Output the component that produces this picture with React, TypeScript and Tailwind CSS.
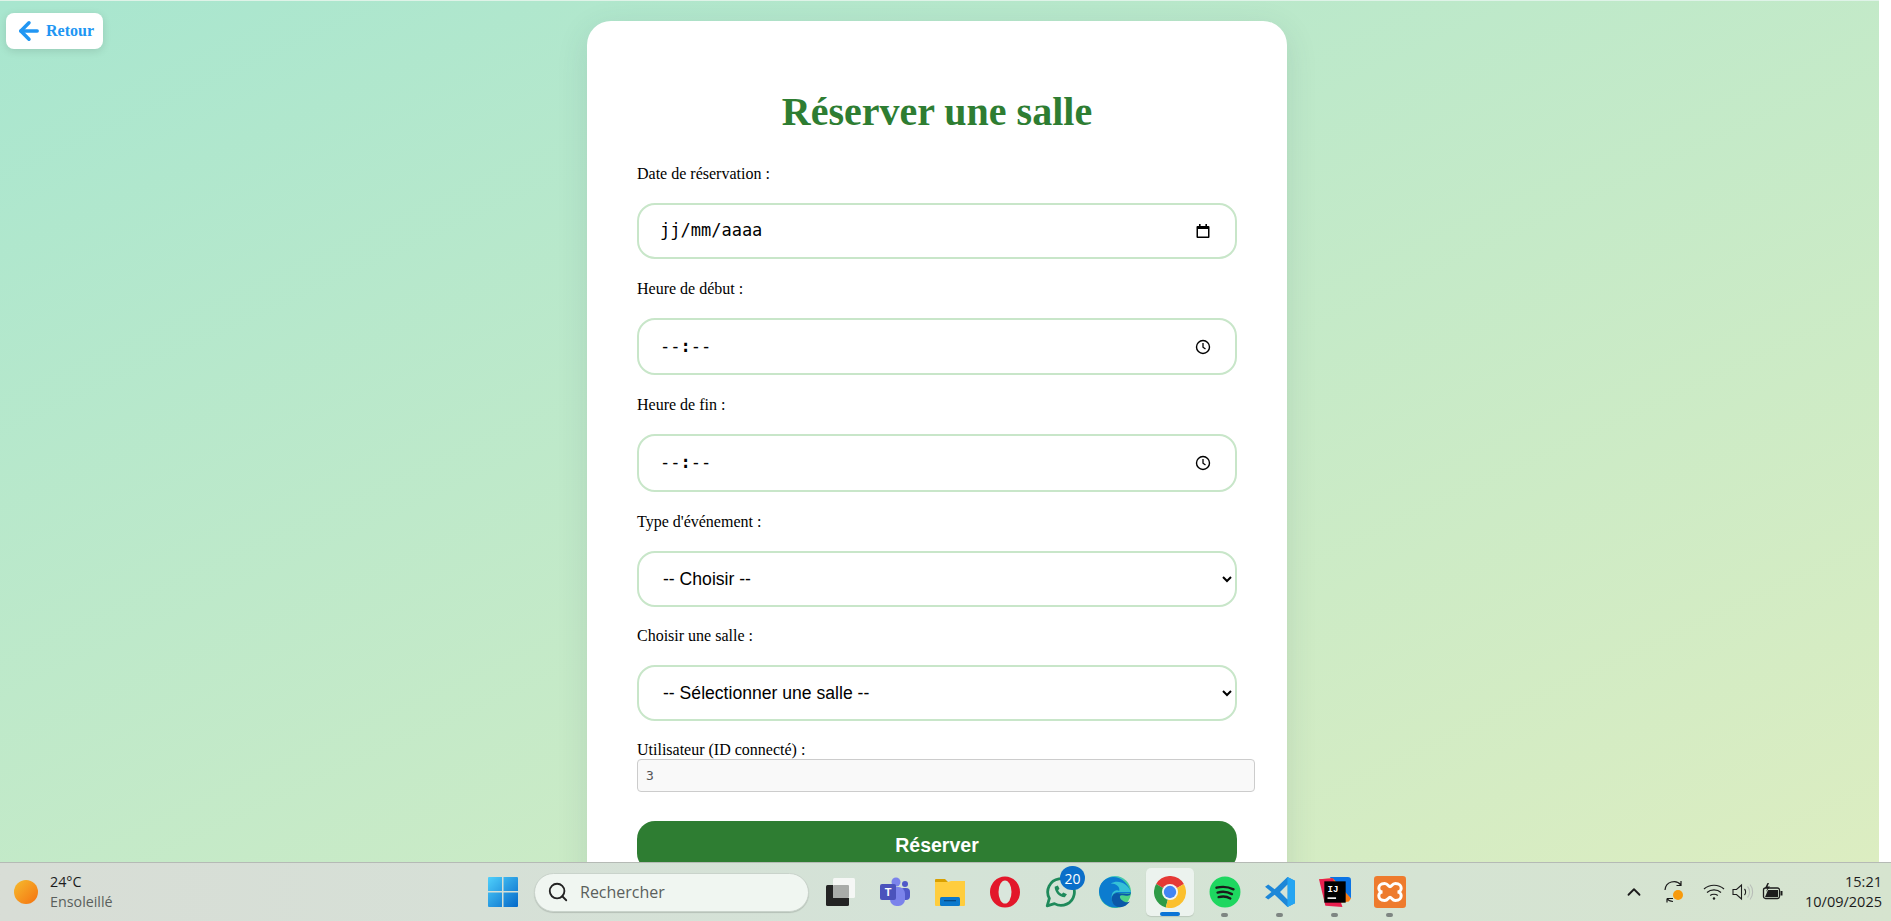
import { ArrowLeft, ChevronUp, Search } from "lucide-react";

const FIELD =
  "flex w-[600px] shrink-0 items-center rounded-[18px] border-2 border-[#c8e6c9] bg-white";

function CalendarIcon() {
  return (
    <svg width="16" height="16" viewBox="0 0 16 16" fill="none">
      <path d="M4 1h1.600v2H10.400V1H12v2h1.500A1 1 0 0 1 14.500 4v10a1 1 0 0 1-1 1h-11a1 1 0 0 1-1-1V4a1 1 0 0 1 1-1H4z" fill="#000" />
      <rect x="3" y="6" width="10" height="7.500" fill="#fff" />
    </svg>
  );
}

function ClockIcon() {
  return (
    <svg width="16" height="16" viewBox="0 0 16 16" fill="none" stroke="#000">
      <circle cx="8" cy="8" r="6.500" strokeWidth="1.400" />
      <path d="M8 4v4.200l2.500 1.800" strokeWidth="1.300" />
    </svg>
  );
}

function FieldLabel({ children, className }: { children: string; className: string }) {
  return (
    <label className={`block text-[16px] leading-[18px] text-black ${className}`}>
      {children}
    </label>
  );
}

function TimeField({ className }: { className: string }) {
  return (
    <div className={`${FIELD} pl-[21px] pr-[24px] ${className}`}>
      <span className="font-['DejaVu_Sans_Mono',monospace] text-[17px] text-black">
        --<b>:</b>--
      </span>
      <span className="ml-auto flex">
        <ClockIcon />
      </span>
    </div>
  );
}

function SelectField({ value }: { value: string }) {
  return (
    <select
      defaultValue={value}
      className="h-[56px] w-[600px] shrink-0 rounded-[18px] border-2 border-[#c8e6c9] bg-white pl-[20px] font-['Liberation_Sans',Arial,sans-serif] text-[17.600px] text-black outline-none"
    >
      <option>{value}</option>
    </select>
  );
}

function TaskIcon({ children, dot, active }: { children: React.ReactNode; dot?: boolean; active?: boolean }) {
  return (
    <div className={`relative flex h-[48px] w-[48px] items-center justify-center rounded-[5px] ${active ? "bg-[#ecf3ee] shadow-[0_1px_1px_rgba(0,0,0,0.12)]" : ""}`}>
      {children}
      {dot && <span className="absolute bottom-[-1px] left-[20px] h-[4px] w-[7px] rounded-full bg-[#7e8682]" />}
      {active && <span className="absolute bottom-0 left-[14px] h-[4px] w-[20px] rounded-full bg-[#0a74d6]" />}
    </div>
  );
}

function Taskbar() {
  return (
    <footer className="relative flex h-[59px] shrink-0 items-center border-t border-[#b5bab5] bg-gradient-to-r from-[#d8ddd6] via-[#d4e3d7] to-[#d6e4cf] font-['Open_Sans',sans-serif]">
      <div className="ml-[14px] flex w-[456px] items-center">
        <span className="h-[24px] w-[24px] rounded-full bg-gradient-to-br from-[#f4bb2d] to-[#f4700f]" />
        <div className="ml-[12px] text-[14.300px] leading-[20px]">
          <div className="text-[#1c1c1c]">24°C</div>
          <div className="text-[#5a5f5c]">Ensoleillé</div>
        </div>
      </div>

      <div className="flex items-center">
        <svg width="30" height="30" viewBox="0 0 30 30" className="ml-[18px]">
          <defs>
            <linearGradient id="win" x1="0" y1="0" x2="1" y2="1">
              <stop offset="0" stopColor="#4fd0fb" />
              <stop offset="1" stopColor="#0468c9" />
            </linearGradient>
          </defs>
          <path d="M0 1a1 1 0 0 1 1-1h13v14H0zM15.500 0H29a1 1 0 0 1 1 1v13H15.500zM0 15.500h14V30H1a1 1 0 0 1-1-1zM15.500 15.500H30V29a1 1 0 0 1-1 1H15.500z" fill="url(#win)" />
        </svg>
        <div className="ml-[16px] flex h-[39px] w-[275px] items-center rounded-full border border-[#c9d3cb] bg-[#f0f6f1] pl-[12px] shadow-[0_1px_1px_rgba(0,0,0,0.15)]">
          <Search size={22} strokeWidth={2} className="text-[#222]" />
          <span className="ml-[11px] text-[16px] text-[#5b5f5c]">Rechercher</span>
        </div>

        <div className="ml-[7px] flex items-center gap-[7px]">
          <TaskIcon>
            <svg width="32" height="32" viewBox="0 0 32 32">
              <rect x="2" y="9" width="23" height="21" rx="1.500" fill="#232323" />
              <rect x="9" y="2" width="22" height="20" rx="1.500" fill="#f5f7f5" />
              <rect x="9" y="9" width="16" height="13" rx="1" fill="#a9aca9" />
            </svg>
          </TaskIcon>
          <TaskIcon>
            <svg width="32" height="32" viewBox="0 0 32 32">
              <circle cx="26" cy="8" r="3" fill="#5059c9" />
              <rect x="21" y="12" width="10" height="12" rx="4" fill="#5059c9" />
              <circle cx="17" cy="6" r="4.500" fill="#7b83eb" />
              <rect x="11" y="11" width="15" height="19" rx="6.500" fill="#7b83eb" />
              <rect x="1" y="8" width="16" height="16" rx="2" fill="#4b53bc" />
              <text x="9" y="20" textAnchor="middle" fontSize="11" fontWeight="700" fill="#fff" fontFamily="Liberation Sans">T</text>
            </svg>
          </TaskIcon>
          <TaskIcon>
            <svg width="32" height="32" viewBox="0 0 32 32">
              <path d="M1 4a1 1 0 0 1 1-1h9l3 3h-13z" fill="#d9a000" />
              <path d="M1 6h13l3-1h14v24a1 1 0 0 1-1 1H2a1 1 0 0 1-1-1z" fill="#ffcd3e" />
              <rect x="6" y="21" width="20" height="9" rx="1.500" fill="#0b78cc" />
              <rect x="10" y="24" width="12" height="1.300" fill="#064a86" />
            </svg>
          </TaskIcon>
          <TaskIcon>
            <svg width="32" height="32" viewBox="0 0 32 32" fill="none">
              <ellipse cx="16" cy="16" rx="15" ry="15.500" fill="#e3172a" />
              <ellipse cx="16" cy="16" rx="6.500" ry="11.500" fill="#d9e6dc" />
            </svg>
          </TaskIcon>
          <TaskIcon>
            <svg width="32" height="32" viewBox="0 0 30 30" fill="none">
              <path d="M3 28l2-7a12.500 12.500 0 1 1 4.800 4.900z" stroke="#1f8a5b" strokeWidth="2.600" strokeLinejoin="round" />
              <path d="M10 10c0 5 4 9.500 9.500 10l2-3-3.500-1.500-1.300 1.300c-1.700-.8-2.800-2-3.500-3.500l1.300-1.300L13 9z" fill="#1f8a5b" />
            </svg>
            <span className="absolute right-[-1px] top-[-2px] flex h-[24px] w-[25px] items-center justify-center rounded-full bg-[#0b6fc9] text-[14px] text-white">
              20
            </span>
          </TaskIcon>
          <TaskIcon>
            <svg width="32" height="32" viewBox="0 0 30 30">
              <defs>
                <linearGradient id="edge" x1="0" y1="0" x2="1" y2="1">
                  <stop offset="0" stopColor="#35c1d6" />
                  <stop offset="1" stopColor="#54d66d" />
                </linearGradient>
              </defs>
              <circle cx="15" cy="15" r="15" fill="url(#edge)" />
              <path d="M0 15C1 26 12 33 22 28c-6 1-10-2-10-7 0-3 2-5 5-5 5 0 9 1 13 0C28 6 18-2 8 2 3 4 0 9 0 15z" fill="#0c7ccf" />
              <path d="M12 21c0-3 2-5 5-5 5 0 9 2 13 0-1 4-5 2-9 2-2 0-2 3 1 5 2 2 5 2 7 1-3 4-7 6-11 5-4-1-6-4-6-8z" fill="#0a58a8" />
              <path d="M12 21c0-3 2-6 6-6h12C27 7 18 3 11 7c5 0 9 3 8 7-4-2-8 2-7 7z" fill="#35c1d6" />
            </svg>
          </TaskIcon>
          <TaskIcon active>
            <svg width="32" height="32" viewBox="0 0 30 30">
              <path d="M15 15L2 7.500A15 15 0 0 1 28 7.500z" fill="#e53935" />
              <path d="M15 15L2 7.500A15 15 0 0 0 11 29.500z" fill="#2e9b46" />
              <path d="M15 15l13-7.500A15 15 0 0 1 11 29.500z" fill="#fbc02d" />
              <circle cx="15" cy="15" r="7.500" fill="#f3f5f3" />
              <circle cx="15" cy="15" r="5.800" fill="#4285f4" />
            </svg>
          </TaskIcon>
          <TaskIcon dot>
            <svg width="32" height="32" viewBox="0 0 30 30" fill="none">
              <circle cx="15" cy="15" r="14.500" fill="#1ed760" />
              <path d="M7 11c5.500-1.500 11-1 16 1.500M8 15.500c4.500-1.200 9.500-.8 13.500 1.500M9 19.800c4-1 8-.6 11 1.200" stroke="#1b1b1b" strokeWidth="2.200" strokeLinecap="round" />
            </svg>
          </TaskIcon>
          <TaskIcon dot>
            <svg width="32" height="32" viewBox="0 0 30 30">
              <path d="M22 1l7 3.500v21L22 29 10 17.500 4 22l-3-2 6-5-6-5 3-2 6 4.500z" fill="#1d87d8" />
              <path d="M22 1l7 3.500v21L22 29z" fill="#25a5f2" />
              <path d="M22 8l-7 7 7 7z" fill="#d4e3d7" />
            </svg>
          </TaskIcon>
          <TaskIcon dot>
            <svg width="32" height="32" viewBox="0 0 30 30">
              <path d="M10 1h17a3 3 0 0 1 3 3v17z" fill="#0b74e5" />
              <path d="M0 3l13-1 17 19-2 3-8 1z" fill="#f97a12" />
              <path d="M0 3l6 25 16 1-9-27z" fill="#e8204f" />
              <rect x="5" y="5" width="20" height="20" fill="#000" />
              <text x="8" y="15" fontSize="8.500" fontWeight="700" fill="#fff" fontFamily="Liberation Mono">IJ</text>
              <rect x="8" y="20" width="8" height="1.500" fill="#fff" />
            </svg>
          </TaskIcon>
          <TaskIcon dot>
            <svg width="32" height="32" viewBox="0 0 30 30" fill="none">
              <rect width="30" height="30" rx="3" fill="#ee7b2d" />
              <path d="M10 7c-4 0-5.500 2.500-5.500 4.500S6 15 8 15c-2 0-3.500 1.500-3.500 3.500S6 23 10 23c3 0 3.500-3 5-3s2 3 5 3c4 0 5.500-2.500 5.500-4.500S24 15 22 15c2 0 3.500-1.500 3.500-3.500S24 7 20 7c-3 0-3.500 3-5 3s-2-3-5-3z" stroke="#fff" strokeWidth="2.800" />
            </svg>
          </TaskIcon>
        </div>
      </div>

      <div className="ml-auto flex items-center pr-[9px]">
        <ChevronUp size={22} strokeWidth={2} className="text-[#1c1c1c]" />
        <svg width="24" height="24" viewBox="0 0 24 24" fill="none" className="ml-[18px]">
          <path d="M2 10a9 9 0 0 1 16-5M18 1v4.500h-4.500M4 18.500h6M4 18.500v4M4 18.500c1 1.500 3 3 6 3" stroke="#1c1c1c" strokeWidth="1.200" />
          <circle cx="15" cy="15" r="5" fill="#f79a0c" />
        </svg>
        <svg width="22" height="18" viewBox="0 0 22 18" fill="none" stroke="#1c1c1c" strokeWidth="1.200" className="ml-[16px]">
          <path d="M1 6c5.500-5 14.500-5 20 0M4 9.500c3.800-3.400 10.200-3.400 14 0M7.200 12.500c2-1.700 5.600-1.700 7.600 0" />
          <circle cx="11" cy="15.500" r="1.200" fill="#1c1c1c" stroke="none" />
        </svg>
        <svg width="22" height="18" viewBox="0 0 22 18" fill="none" className="ml-[7px]">
          <path d="M1 6.500h3.500L9.500 2v14l-5-4.500H1z" stroke="#1c1c1c" strokeWidth="1.100" />
          <path d="M12.500 6c1.500 1.600 1.500 4.400 0 6" stroke="#1c1c1c" strokeWidth="1.100" />
          <path d="M15.500 3.500c2.800 3 2.800 8 0 11M18 1.500c3.500 4 3.500 11 0 15" stroke="#b8bdb8" strokeWidth="1.100" />
        </svg>
        <svg width="21" height="18" viewBox="0 0 21 18" className="ml-[8px]">
          <rect x="1.500" y="5" width="16" height="10.500" rx="2" fill="none" stroke="#1c1c1c" strokeWidth="1.300" />
          <path d="M3 14l3-7h10v7z" fill="#1c1c1c" />
          <rect x="18.500" y="8" width="2" height="4.500" fill="#1c1c1c" />
          <path d="M5.500 0L3 5h2.500L4 9l4-5.500H5.500L7 0z" fill="#1c1c1c" />
        </svg>
        <div className="ml-[15px] w-[84px] text-right text-[14.500px] leading-[20px] text-[#1c1c1c]">
          <div>15:21</div>
          <div>10/09/2025</div>
        </div>
      </div>
    </footer>
  );
}

export default function App() {
  return (
    <div className="flex h-[921px] w-full flex-col overflow-hidden font-['Liberation_Serif',serif]">
      <div className="flex min-h-0 flex-1">
        <main className="relative flex min-w-0 flex-1 justify-center overflow-hidden border-t border-[#dff3e8] bg-gradient-to-br from-[#a8e6cf] to-[#dcedc1]">
          <a className="absolute left-[6px] top-[12px] flex h-[36px] w-[97px] items-center gap-[3px] rounded-[8px] bg-white pl-[9px] text-[16px] font-bold text-[#2196f3] shadow-[0_2px_8px_rgba(0,0,0,0.12)]">
            <ArrowLeft size={28} strokeWidth={3} />
            Retour
          </a>

          <section className="ml-[-5px] mt-[20px] flex h-[900px] w-[700px] shrink-0 flex-col items-start rounded-[24px] bg-white px-[50px] shadow-[0_8px_32px_rgba(44,62,80,0.12)]">
            <h1 className="mt-[68px] w-[600px] text-center text-[40px] font-bold leading-[46px] text-[#2e7d32]">
              Réserver une salle
            </h1>

            <FieldLabel className="mt-[30px]">Date de réservation :</FieldLabel>
            <div className={`${FIELD} mt-[20px] h-[56px] pl-[21px] pr-[24px]`}>
              <span className="font-['DejaVu_Sans_Mono',monospace] text-[17px] text-black">jj/mm/aaaa</span>
              <span className="ml-auto flex">
                <CalendarIcon />
              </span>
            </div>

            <FieldLabel className="mt-[21px]">Heure de début :</FieldLabel>
            <TimeField className="mt-[20px] h-[57px]" />

            <FieldLabel className="mt-[21px]">Heure de fin :</FieldLabel>
            <TimeField className="mt-[20px] h-[58px]" />

            <FieldLabel className="mt-[21px]">Type d'événement :</FieldLabel>
            <div className="mt-[20px] flex"><SelectField value="-- Choisir --" /></div>

            <FieldLabel className="mt-[20px]">Choisir une salle :</FieldLabel>
            <div className="mt-[20px] flex"><SelectField value="-- Sélectionner une salle --" /></div>

            <FieldLabel className="mt-[20px]">Utilisateur (ID connecté) :</FieldLabel>
            <input
              readOnly
              value="3"
              className="h-[33px] w-[618px] shrink-0 rounded-[4px] border border-[#cccccc] bg-[#f9f9f9] px-[8px] font-['DejaVu_Sans_Mono',monospace] text-[13px] text-[#555] outline-none"
            />

            <button className="mt-[29px] h-[50px] w-[600px] shrink-0 rounded-[18px] bg-[#2e7d32] font-['Liberation_Sans',sans-serif] text-[19.500px] font-bold text-white">
              Réserver
            </button>
          </section>
        </main>
        <div className="w-[12px] shrink-0 bg-white" />
      </div>
      <Taskbar />
    </div>
  );
}
